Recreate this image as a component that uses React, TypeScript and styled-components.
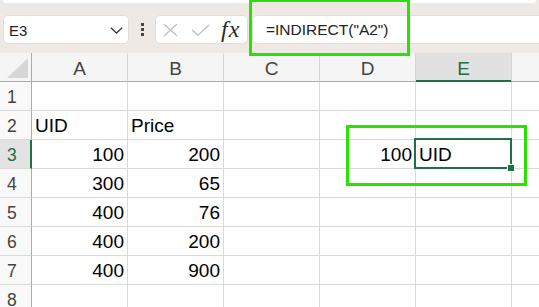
import React from 'react';
import styled, { createGlobalStyle, css } from 'styled-components';

const Global = createGlobalStyle`
  html, body { margin: 0; padding: 0; }
  body {
    background: #efe9e6;
    font-family: "Liberation Sans", Arial, sans-serif;
    width: 539px;
    height: 307px;
    overflow: hidden;
  }
  * { box-sizing: border-box; }
`;

const Page = styled.div`
  position: relative;
  width: 539px;
  height: 307px;
  overflow: hidden;
`;

const TopStrip = styled.div`
  height: 3px;
  margin: 0 3px;
  background: #fff;
  border-radius: 0 0 5px 5px;
`;

const FormulaBar = styled.div`
  display: flex;
  align-items: stretch;
  height: 29px;
  margin: 12px 0 9px 0;
  padding-left: 3px;
`;

const NameBox = styled.div`
  width: 126px;
  display: flex;
  align-items: center;
  justify-content: space-between;
  padding: 1px 5px 0 5px;
  background: #fff;
  border: 1px solid #e4dedb;
  border-radius: 5px;
  font-size: 15px;
  color: #222;
`;

const Dots = styled.div`
  width: 26px;
  display: flex;
  flex-direction: column;
  align-items: center;
  justify-content: center;
  gap: 2px;
`;

const Dot = styled.span`
  width: 3px;
  height: 3px;
  background: #454545;
`;

const ButtonGroup = styled.div`
  width: 93px;
  display: flex;
  align-items: center;
  padding-left: 7px;
  background: #fff;
  border: 1px solid #e4dedb;
  border-radius: 5px;
`;

const IconSlot = styled.span<{ $gap?: number }>`
  display: flex;
  align-items: center;
  margin-right: ${p => p.$gap ?? 0}px;
`;

const Fx = styled.span`
  font-family: "Liberation Serif", "Times New Roman", serif;
  font-style: italic;
  font-size: 24px;
  letter-spacing: 1px;
  color: #2a2a2a;
  line-height: 1;
  margin-top: -2px;
`;

const FormulaInput = styled.div`
  flex: 1;
  margin-left: 4px;
  margin-right: -6px;
  display: flex;
  align-items: center;
  padding: 1px 0 0 13px;
  background: #fff;
  border: 1px solid #e4dedb;
  border-radius: 5px;
  font-size: 15.5px;
  color: #222;
`;

const Sheet = styled.div`
  display: grid;
  grid-template-columns: 32px repeat(6, 96px);
  grid-auto-rows: 29px;
  background: #fff;
  width: 608px;
`;

const Corner = styled.div`
  display: flex;
  justify-content: flex-end;
  align-items: flex-end;
  padding: 0 3px 3px 0;
  background: #f5f5f5;
  border-right: 1px solid #ababab;
  border-bottom: 1px solid #ababab;
`;

const ColHeader = styled.div<{ $active?: boolean }>`
  display: flex;
  justify-content: center;
  align-items: center;
  padding-top: 3px;
  font-size: 19px;
  color: #444;
  background: #f5f5f5;
  border-right: 1px solid #d6d6d6;
  border-bottom: 1px solid #ababab;
  ${p =>
    p.$active &&
    css`
      background: #e1e1e1;
      color: #1e6e42;
      border-bottom-color: #1e7145;
      box-shadow: inset 0 -1px 0 #1e7145;
    `}
`;

const RowHeader = styled.div<{ $active?: boolean }>`
  display: flex;
  align-items: center;
  padding: 2px 0 0 7px;
  font-size: 17.5px;
  color: #444;
  background: #f9f9f9;
  border-right: 1px solid #ababab;
  border-bottom: 1px solid #dadada;
  ${p =>
    p.$active &&
    css`
      background: #e3e3e3;
      color: #1e6e42;
      border-right: 2px solid #1e7145;
    `}
`;

const Cell = styled.div<{ $align?: 'left' | 'right'; $selected?: boolean }>`
  position: relative;
  padding: 1px 3px 0 3px;
  line-height: 27px;
  font-size: 19px;
  color: #000;
  text-align: ${p => p.$align ?? 'left'};
  border-right: 1px solid #dadada;
  border-bottom: 1px solid #dadada;
  white-space: nowrap;
  ${p =>
    p.$selected &&
    css`
      &::after {
        content: '';
        position: absolute;
        top: -2px;
        left: -2px;
        right: -1px;
        bottom: -1px;
        border: 2px solid #1e7145;
        pointer-events: none;
      }
    `}
`;

const FillHandle = styled.span`
  position: absolute;
  right: -3px;
  bottom: -3px;
  width: 6px;
  height: 6px;
  background: #1e7145;
  box-shadow: 0 0 0 1px #fff;
  z-index: 2;
`;

const FormulaHighlight = styled.div`
  position: absolute;
  left: 249px;
  top: -1px;
  width: 161px;
  height: 57px;
  border: 3px solid #26e300;
  pointer-events: none;
`;

const CellHighlight = styled.div`
  position: absolute;
  left: 346px;
  top: 125px;
  width: 181px;
  height: 61px;
  border: 3px solid #26e300;
  pointer-events: none;
`;

// F is only partly in view; its letter lies past the right edge.
const cols = ['A', 'B', 'C', 'D', 'E', 'F'];
const visibleHeader = (c: string) => (c === 'F' ? '' : c);

const rows: Record<number, Record<string, string | number>> = {
  1: {},
  2: { A: 'UID', B: 'Price' },
  3: { A: 100, B: 200, D: 100, E: 'UID' },
  4: { A: 300, B: 65 },
  5: { A: 400, B: 76 },
  6: { A: 400, B: 200 },
  7: { A: 400, B: 900 },
  8: {},
};

const activeCol = 'E';
const activeRow = 3;

export default function App() {
  return (
    <Page>
      <Global />
      <TopStrip />
      <FormulaBar>
        <NameBox>
          <span>E3</span>
          <svg width="13" height="7" viewBox="0 0 13 7">
            <path d="M0.8 0.8 L6.5 6 L12.2 0.8" fill="none" stroke="#3a3a3a" strokeWidth="1.3" />
          </svg>
        </NameBox>
        <Dots>
          <Dot />
          <Dot />
          <Dot />
        </Dots>
        <ButtonGroup>
          <IconSlot $gap={13}>
            <svg width="15" height="14" viewBox="0 0 15 14">
              <path d="M1 1 L14 13 M14 1 L1 13" stroke="#bfbfbf" strokeWidth="1.3" fill="none" />
            </svg>
          </IconSlot>
          <IconSlot $gap={11}>
            <svg width="19" height="12" viewBox="0 0 19 12">
              <path d="M1 6 L7 11.2 L18 1" stroke="#bfbfbf" strokeWidth="1.3" fill="none" />
            </svg>
          </IconSlot>
          <Fx>fx</Fx>
        </ButtonGroup>
        <FormulaInput>=INDIRECT("A2")</FormulaInput>
      </FormulaBar>
      <Sheet>
        <Corner>
          <svg width="21" height="20" viewBox="0 0 21 20">
            <path d="M21 0 L21 20 L0 20 Z" fill="#d6d6d6" />
          </svg>
        </Corner>
        {cols.map(c => (
          <ColHeader key={c} $active={c === activeCol}>
            {visibleHeader(c)}
          </ColHeader>
        ))}
        {Object.keys(rows).map(rk => {
          const r = Number(rk);
          return (
            <React.Fragment key={r}>
              <RowHeader $active={r === activeRow}>{r}</RowHeader>
              {cols.map(c => {
                const v = rows[r][c];
                const selected = r === activeRow && c === activeCol;
                return (
                  <Cell
                    key={c}
                    $align={typeof v === 'number' ? 'right' : 'left'}
                    $selected={selected}
                  >
                    {v ?? ''}
                    {selected && <FillHandle />}
                  </Cell>
                );
              })}
            </React.Fragment>
          );
        })}
      </Sheet>
      <FormulaHighlight />
      <CellHighlight />
    </Page>
  );
}
